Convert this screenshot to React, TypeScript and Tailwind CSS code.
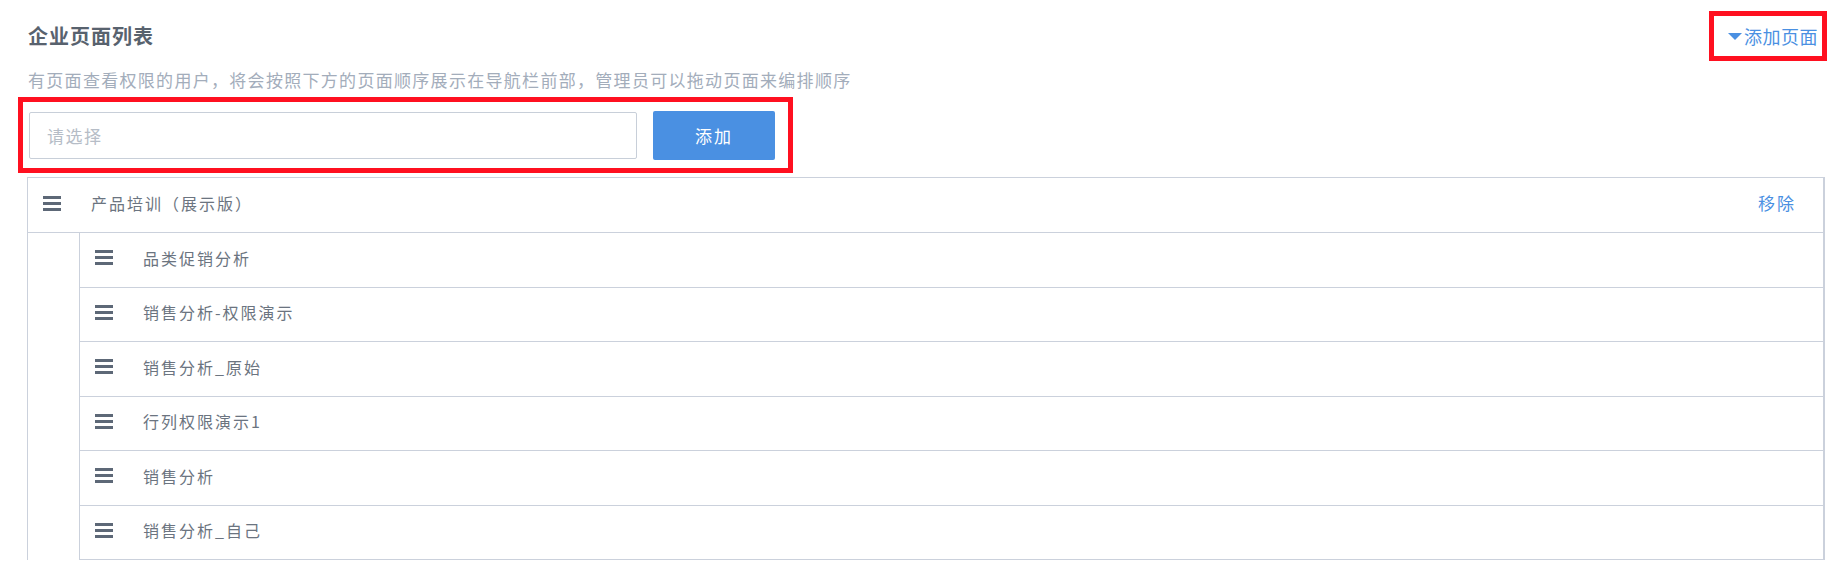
import React from 'react';

const children = ['品类促销分析', '销售分析-权限演示', '销售分析_原始', '行列权限演示1', '销售分析', '销售分析_自己'];

function DragHandle() {
  return (
    <svg width="18" height="15" viewBox="0 0 18 15" className="shrink-0">
      <rect x="0" y="0" width="18" height="3" fill="#5d6877" />
      <rect x="0" y="6" width="18" height="3" fill="#5d6877" />
      <rect x="0" y="12" width="18" height="3" fill="#5d6877" />
    </svg>
  );
}

export default function App() {
  return (
    <div
      className="w-[1838px] h-[570px] bg-white pl-[27px] pr-[13px] overflow-hidden"
      style={{ fontFamily: '"Noto Sans CJK SC", "Noto Sans", sans-serif' }}
    >
      {/* Header */}
      <div className="flex items-center justify-between mt-[11px] h-[50px] -mr-[2px]">
        <h1 className="text-[20px] leading-[20px] font-bold tracking-[1px] text-[#58626e] ml-[1px]">企业页面列表</h1>
        <div className="h-[50px] border-[5px] border-[#ff1020] flex items-center pl-[14px] pr-[4px]">
          <span className="w-0 h-0 border-l-[7px] border-r-[7px] border-t-[7px] border-l-transparent border-r-transparent border-t-[#4a90e2] mr-[2px]" />
          <span className="text-[18px] leading-[18px] text-[#4a90e2] tracking-[0.5px]">添加页面</span>
        </div>
      </div>

      <p className="mt-[10px] ml-[1px] text-[17px] leading-[17px] tracking-[1.3px] text-[#a3adbb]">
        有页面查看权限的用户，将会按照下方的页面顺序展示在导航栏前部，管理员可以拖动页面来编排顺序
      </p>

      {/* Add row */}
      <div className="mt-[9px] -ml-[9px] w-fit border-[5px] border-[#ff1020] pl-[6px] pr-[13px] pt-[9px] pb-[8px] flex items-center gap-[16px]">
        <div className="w-[608px] h-[47px] border border-[#c8cfd9] rounded-[2px] flex items-center pl-[17px] text-[17px] tracking-[1.5px] text-[#b6bdc7]">
          请选择
        </div>
        <button className="w-[122px] h-[49px] bg-[#4a90e2] rounded-[2px] text-white text-[17px] tracking-[2px]">
          添加
        </button>
      </div>

      {/* Page list */}
      <div className="mt-[4px] border-t border-l border-r-2 border-[#cbd1dc]">
        <div className="h-[55px] border-b border-[#cbd1dc] flex items-center pl-[15px] pr-[27px] pb-[4px]">
          <DragHandle />
          <span className="ml-[30px] text-[16px] tracking-[2px] text-[#6b7480]">产品培训（展示版）</span>
          <span className="ml-auto text-[17px] tracking-[2px] text-[#4a90e2]">移除</span>
        </div>
        <div className="ml-[51px] border-l border-[#cbd1dc]">
          {children.map((name) => (
            <div key={name} className="h-[54.5px] border-b border-[#cbd1dc] flex items-center pl-[15px] pb-[4px]">
              <DragHandle />
              <span className="ml-[30px] text-[16px] tracking-[2px] text-[#6b7480]">{name}</span>
            </div>
          ))}
        </div>
      </div>
    </div>
  );
}
